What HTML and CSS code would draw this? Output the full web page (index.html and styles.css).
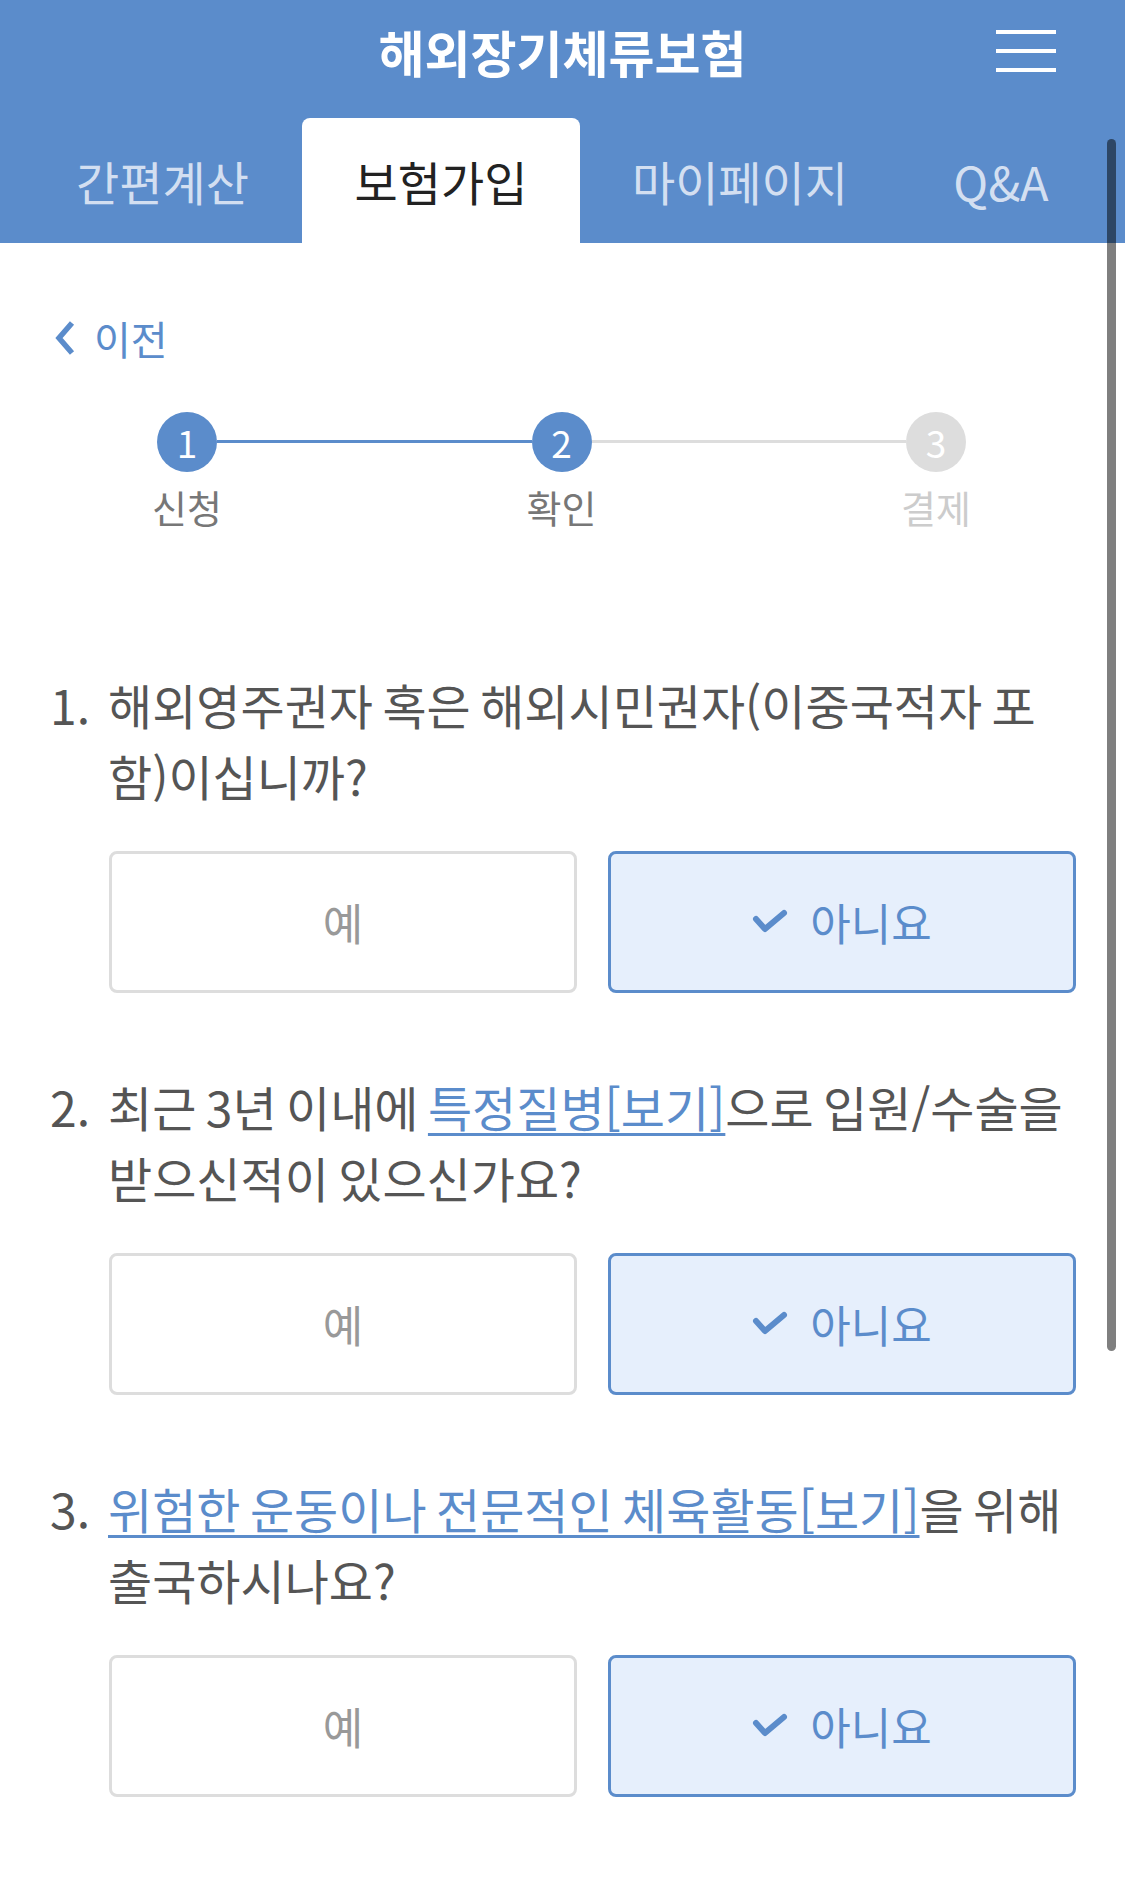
FILE: index.html
```html
<!DOCTYPE html>
<html lang="ko">
<head>
<meta charset="utf-8">
<title>해외장기체류보험</title>
<link rel="stylesheet" href="styles.css">
</head>
<body>
<header class="header">
  <div class="topbar">
    <span class="spacer"></span>
    <h1 class="title">해외장기체류보험</h1>
    <button class="menu" aria-label="메뉴"><span></span><span></span><span></span></button>
  </div>
  <nav class="tabs">
    <a class="tab">간편계산</a>
    <a class="tab active">보험가입</a>
    <a class="tab">마이페이지</a>
    <a class="tab">Q&amp;A</a>
  </nav>
</header>

<main class="main">
  <a class="back">
    <svg class="chev" width="26" height="36" viewBox="0 0 26 36"><path d="M21 3 L8 18 L21 33" fill="none" stroke="#5b8ccb" stroke-width="5.5"/></svg>
    <span>이전</span>
  </a>

  <div class="stepper">
    <div class="step done"><div class="circle">1</div><div class="label">신청</div></div>
    <div class="line done"></div>
    <div class="step done"><div class="circle">2</div><div class="label">확인</div></div>
    <div class="line"></div>
    <div class="step"><div class="circle">3</div><div class="label">결제</div></div>
  </div>

  <section class="q first">
    <div class="q-head"><span class="num">1.</span><p class="text">해외영주권자 혹은 해외시민권자(이중국적자 포함)이십니까?</p></div>
    <div class="opts">
      <button class="opt">예</button>
      <button class="opt sel"><svg class="check" width="36" height="26" viewBox="0 0 36 26"><path d="M4 10 L13 20 L32 4" fill="none" stroke="#5b8ccb" stroke-width="6" stroke-linecap="round" stroke-linejoin="round"/></svg><span>아니요</span></button>
    </div>
  </section>

  <section class="q">
    <div class="q-head"><span class="num">2.</span><p class="text">최근 3년 이내에 <a class="link">특정질병[보기]</a>으로 입원/수술을 받으신적이 있으신가요?</p></div>
    <div class="opts">
      <button class="opt">예</button>
      <button class="opt sel"><svg class="check" width="36" height="26" viewBox="0 0 36 26"><path d="M4 10 L13 20 L32 4" fill="none" stroke="#5b8ccb" stroke-width="6" stroke-linecap="round" stroke-linejoin="round"/></svg><span>아니요</span></button>
    </div>
  </section>

  <section class="q">
    <div class="q-head"><span class="num">3.</span><p class="text"><a class="link">위험한 운동이나 전문적인 체육활동[보기]</a>을 위해 출국하시나요?</p></div>
    <div class="opts">
      <button class="opt">예</button>
      <button class="opt sel"><svg class="check" width="36" height="26" viewBox="0 0 36 26"><path d="M4 10 L13 20 L32 4" fill="none" stroke="#5b8ccb" stroke-width="6" stroke-linecap="round" stroke-linejoin="round"/></svg><span>아니요</span></button>
    </div>
  </section>
</main>

<div class="scrollbar"></div>
</body>
</html>
```

FILE: styles.css
```css
* { box-sizing: border-box; }

html, body {
  margin: 0;
  padding: 0;
  background: #ffffff;
  overflow: hidden;
}

body {
  font-family: "Noto Sans CJK KR", "Noto Sans", sans-serif;
  color: #555555;
}

.header {
  background: #5b8ccb;
  height: 243px;
}

.topbar {
  height: 102px;
  display: grid;
  grid-template-columns: 1fr auto 1fr;
  align-items: center;
}

.title {
  margin: 0;
  font-size: 50px;
  font-weight: 700;
  color: #ffffff;
  line-height: 60px;
}

.menu {
  justify-self: end;
  margin-right: 69px;
  width: 60px;
  height: 42px;
  padding: 0;
  border: 0;
  background: transparent;
  display: flex;
  flex-direction: column;
  justify-content: space-between;
}

.menu span {
  display: block;
  height: 4px;
  width: 60px;
  background: #ffffff;
}

.tabs {
  margin-top: 16px;
  height: 125px;
  display: grid;
  grid-template-columns: 279px 278px 320px 202px;
  padding-left: 23px;
}

.tab {
  display: flex;
  align-items: center;
  justify-content: center;
  font-size: 47px;
  color: #d3dff1;
  white-space: nowrap;
}

.tab.active {
  background: #ffffff;
  color: #222222;
  border-radius: 8px 8px 0 0;
}

.main {
  padding: 0 49px 0 50px;
}

.back {
  margin-top: 70px;
  height: 50px;
  display: flex;
  align-items: center;
  gap: 17px;
  color: #5b8ccb;
  font-size: 40px;
  line-height: 50px;
}

.chev { display: block; margin-left: 1px; }

.stepper {
  margin-top: 49px;
  display: flex;
  padding: 0 110px 0 107px;
}

.step {
  width: 60px;
  display: flex;
  flex-direction: column;
  align-items: center;
}

.circle {
  width: 60px;
  height: 60px;
  border-radius: 50%;
  background: #dddddd;
  color: #ffffff;
  font-size: 37px;
  line-height: 60px;
  text-align: center;
}

.step.done .circle { background: #5b8ccb; }

.label {
  margin-top: 15px;
  font-size: 38px;
  line-height: 40px;
  white-space: nowrap;
  color: #cccccc;
}

.step.done .label { color: #777777; }

.line {
  flex: 1;
  height: 3px;
  margin-top: 28px;
  background: #dddddd;
}

.line.done { background: #5b8ccb; }

.q { margin-top: 78px; }
.q.first { margin-top: 142px; }

.q-head {
  display: grid;
  grid-template-columns: 58px 1fr;
  font-size: 48px;
  line-height: 71px;
  color: #555555;
  word-spacing: -4px;
}

.num { display: block; }

.text { margin: 0; }

.link {
  color: #5b8ccb;
  text-decoration: underline;
  text-decoration-thickness: 3px;
  text-underline-offset: 6px;
}

.opts {
  margin: 40px 0 0 59px;
  display: grid;
  grid-template-columns: 1fr 1fr;
  gap: 31px;
}

.opt {
  height: 142px;
  border: 3px solid #dddddd;
  border-radius: 8px;
  background: #ffffff;
  color: #999999;
  font-family: inherit;
  font-size: 44px;
  display: flex;
  align-items: center;
  justify-content: center;
  gap: 22px;
  padding: 0;
}

.opt.sel {
  border-color: #5b8ccb;
  background: #e6effc;
  color: #5b8ccb;
}

.check { display: block; }

.scrollbar {
  position: fixed;
  right: 9px;
  top: 139px;
  width: 9px;
  height: 1212px;
  border-radius: 5px;
  background: rgba(0, 0, 0, 0.5);
}
```
